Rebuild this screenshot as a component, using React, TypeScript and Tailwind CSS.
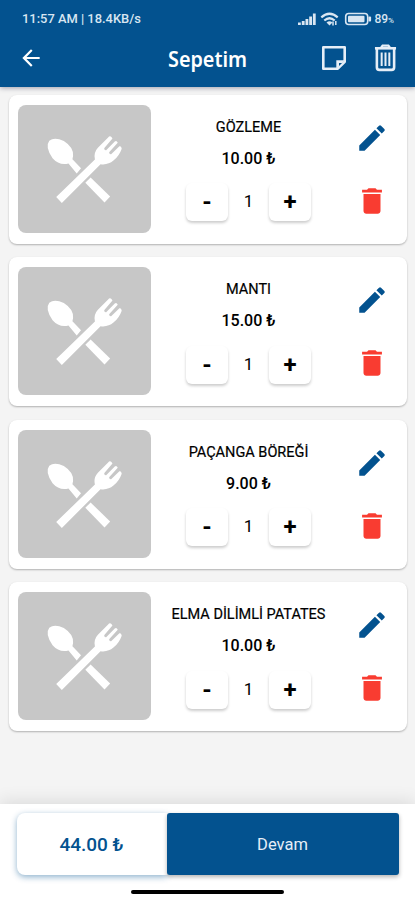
import { MdArrowBack, MdDelete, MdEdit } from "react-icons/md";

type CartItem = { name: string; price: string; qty: number };

const items: CartItem[] = [
  { name: "GÖZLEME", price: "10.00 ₺", qty: 1 },
  { name: "MANTI", price: "15.00 ₺", qty: 1 },
  { name: "PAÇANGA BÖREĞİ", price: "9.00 ₺", qty: 1 },
  { name: "ELMA DİLİMLİ PATATES", price: "10.00 ₺", qty: 1 },
];

const qtyButtonClass =
  "flex h-[38px] w-[42px] items-center justify-center rounded-[6px] bg-white text-[24px] font-bold leading-none shadow-[0_2px_3px_rgba(0,0,0,0.2)]";

function StatusIcons() {
  return (
    <svg width="77" height="14" viewBox="0 0 77 14" fill="#d9e6f2" aria-hidden>
      <rect x="1" y="10.5" width="2.8" height="2.5" />
      <rect x="4.8" y="9" width="2.8" height="4" />
      <rect x="8.5" y="7" width="2.8" height="6" />
      <rect x="12.2" y="4.5" width="2.8" height="8.5" />
      <rect x="15.9" y="1.5" width="2.8" height="11.5" />
      <g fill="none" stroke="#d9e6f2" strokeWidth="2.2">
        <path d="M24.3 5.3Q32.5-1.8 40.7 5.3" />
        <path d="M27.3 8.5Q32.5 4 37.7 8.5" />
      </g>
      <path d="M29.5 10.5Q32.5 8 35.5 10.5L32.5 13.5Z" />
      <path d="M36 9.5v4M38.8 9v4" stroke="#d9e6f2" strokeWidth="1.5" />
      <rect x="48.7" y="1.5" width="22" height="11" rx="3" fill="none" stroke="#d9e6f2" strokeWidth="1.6" />
      <rect x="51" y="3.8" width="16.5" height="6.4" rx="1" />
      <rect x="71.5" y="4.5" width="2.6" height="5" rx="1" />
    </svg>
  );
}

function NoteIcon() {
  return (
    <svg width="26" height="26" viewBox="0 0 26 26" aria-hidden>
      <path
        d="M2.3 2.3h21.4v14.5l-6.9 6.9H2.3z"
        fill="none"
        stroke="#e6eef7"
        strokeWidth="2.6"
        strokeLinejoin="round"
      />
      <path d="M15.3 24v-8.7H24z" fill="#e6eef7" />
      <path d="M18 18h3L18 21z" fill="#03528f" />
    </svg>
  );
}

function TrashIcon() {
  return (
    <svg width="23" height="28" viewBox="0 0 24 28" preserveAspectRatio="none" fill="none" stroke="#e6eef7" aria-hidden>
      <path d="M1 4.3h22" strokeWidth="2.6" />
      <path d="M7.5 3.5 9 1.6h6l1.5 1.9" strokeWidth="2.4" />
      <path d="M3 5v18.2q0 2.6 2.6 2.6h12.8q2.6 0 2.6-2.6V5" strokeWidth="2.7" />
      <path d="M8 8.5v13.5M12 8.5v13.5M16 8.5v13.5" strokeWidth="2.1" />
    </svg>
  );
}

function Cutlery() {
  return (
    <svg className="h-full w-full" viewBox="55 42 399 387" fill="#fff" aria-hidden>
      <path d="M148 150Q164 138 192 151Q222 170 220 196L218 206L244 233L231 249L206 219Q178 226 158 203Q134 168 148 150Z" />
      <path d="M273 261L332 319L315 337L257 277Z" />
      <path d="M169 320L286 207Q281 186 295 171L326 140Q331 134 336 139L339 143L314 173Q314 180 320 179L346 152Q352 148 355 156L329 185Q329 192 335 191L360 167Q366 166 367 174Q360 195 342 210Q326 224 303 221L186 338Z" />
    </svg>
  );
}

function CartRow({ item }: { item: CartItem }) {
  return (
    <li className="flex h-[149px] rounded-[8px] bg-white pl-[9px] pt-[10px] shadow-[0_1px_2px_rgba(0,0,0,0.28)]">
      <div className="h-[128px] w-[133px] shrink-0 overflow-hidden rounded-[8px] bg-[#c7c7c7]">
        <Cutlery />
      </div>
      <div className="flex w-[195px] shrink-0 flex-col items-center pt-[14px] text-black">
        <p className="whitespace-nowrap text-[14.5px] leading-[18px] [-webkit-text-stroke:0.2px_black]">
          {item.name}
        </p>
        <p className="mt-[13px] text-[16px] font-medium leading-[18px]">{item.price}</p>
        <div className="mt-[15.5px] flex items-center">
          <button type="button" className={qtyButtonClass}>
            -
          </button>
          <span className="w-[41px] text-center text-[17px]">{item.qty}</span>
          <button type="button" className={qtyButtonClass}>
            +
          </button>
        </div>
      </div>
      <div className="flex w-[52px] flex-col items-center gap-[29px] pt-[16px]">
        <MdEdit className="h-[34px] w-[34px] text-[#03528f]" />
        <MdDelete className="h-[34px] w-[34px] text-[#f93c31]" />
      </div>
    </li>
  );
}

export default function App() {
  return (
    <div className="flex h-[900px] w-[415px] flex-col overflow-hidden bg-[#f4f4f4] font-['Roboto',sans-serif]">
      <header className="z-10 h-[87px] shrink-0 bg-[#03528f] text-white shadow-[0_1px_5px_rgba(0,0,40,0.35)]">
        <div className="flex h-[37px] items-center pl-[22px] pr-[21px] font-medium text-[#d9e6f2]">
          <span className="text-[12.9px]">11:57 AM | 18.4KB/s</span>
          <div className="ml-auto flex items-center">
            <StatusIcons />
            <span className="text-[12px]">
              89<span className="text-[8px]">%</span>
            </span>
          </div>
        </div>
        <div className="flex h-[42px] items-center pl-[17.5px] pr-[18px]">
          <MdArrowBack className="h-[26px] w-[26px]" />
          <h1 className="ml-[124.5px] origin-left scale-x-90 font-['Noto_Sans',sans-serif] text-[22px] font-semibold leading-none">
            Sepetim
          </h1>
          <div className="ml-auto flex items-center gap-[27px]">
            <NoteIcon />
            <TrashIcon />
          </div>
        </div>
      </header>

      <ul className="flex flex-1 flex-col gap-[13.5px] pl-[9px] pr-[8px] pt-[7.5px]">
        {items.map((item) => (
          <CartRow key={item.name} item={item} />
        ))}
      </ul>

      <footer className="flex h-[96px] shrink-0 flex-col items-center bg-white pt-[9px] shadow-[0_-3px_16px_rgba(0,0,0,0.1)]">
        <div className="flex h-[62px] w-[382px]">
          <div className="flex w-[150px] items-center justify-center rounded-l-[8px] bg-white pt-[2px] text-[19px] font-medium text-[#03528f] shadow-[0_2px_6px_rgba(3,82,143,0.45)]">
            44.00 ₺
          </div>
          <button
            type="button"
            className="z-10 flex-1 rounded-[3px] bg-[#03528f] pt-[2px] text-[16.5px] text-[#e6eef7] shadow-[0_2px_4px_rgba(0,0,0,0.3)]"
          >
            Devam
          </button>
        </div>
        <div className="mt-[15px] h-[4px] w-[153px] rounded-full bg-black" />
      </footer>
    </div>
  );
}
